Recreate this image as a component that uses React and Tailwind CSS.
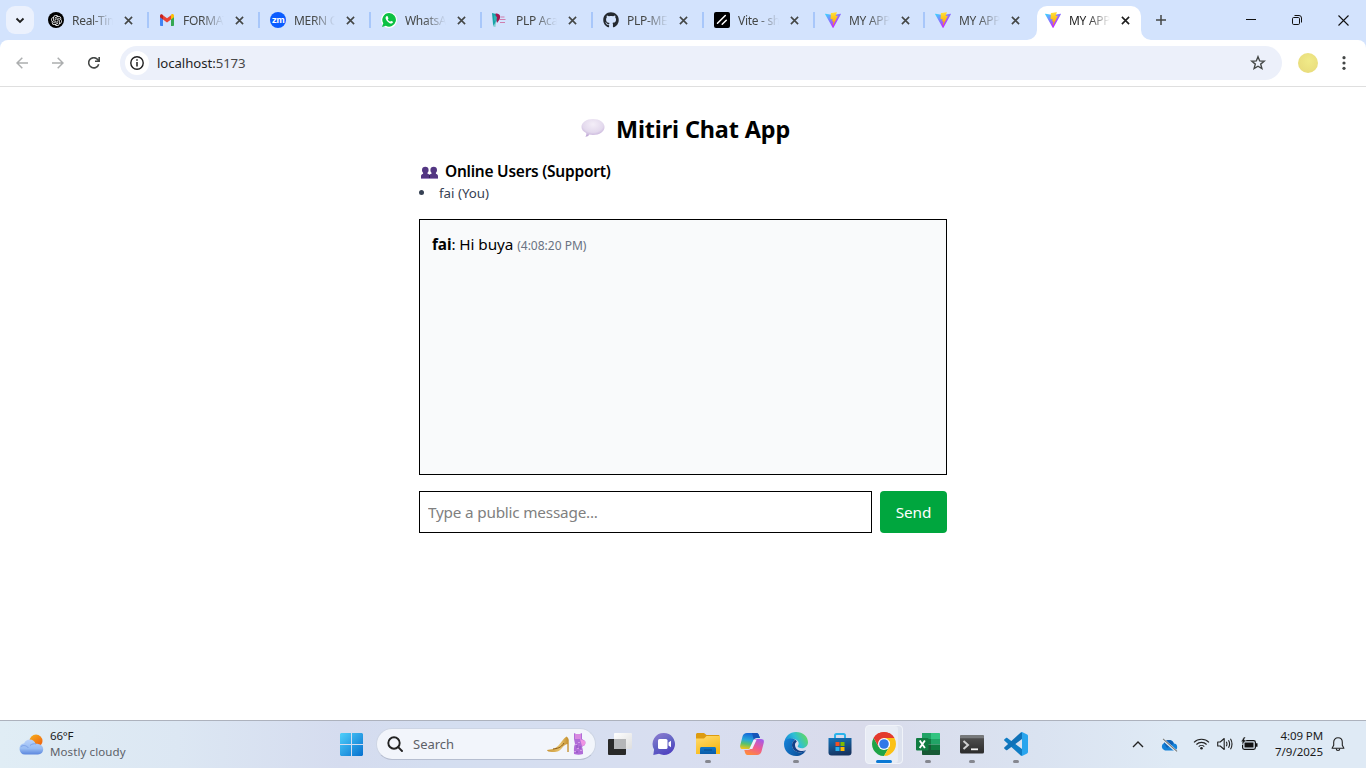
import React from "react";
import { RiOpenaiFill } from "react-icons/ri";
import { FaGithub } from "react-icons/fa";

const UI = "font-['Noto_Sans','Open_Sans',sans-serif]";

function ViteIcon({ id }) {
  return (
    <svg width="16" height="16" viewBox="0 0 256 257">
      <defs>
        <linearGradient id={id + "a"} x1="0" x2="0.58" y1="0.08" y2="0.8">
          <stop offset="0" stopColor="#41D1FF" />
          <stop offset="1" stopColor="#BD34FE" />
        </linearGradient>
        <linearGradient id={id + "b"} x1="0.43" x2="0.5" y1="0.02" y2="0.89">
          <stop offset="0" stopColor="#FFEA83" />
          <stop offset="0.08" stopColor="#FFDD35" />
          <stop offset="1" stopColor="#FFA800" />
        </linearGradient>
      </defs>
      <path fill={`url(#${id}a)`} d="M255.153 37.938L134.897 252.976c-2.483 4.44-8.862 4.466-11.382.048L.875 37.958c-2.746-4.814 1.371-10.646 6.827-9.67l120.385 21.517a6.537 6.537 0 0 0 2.322-.004l117.867-21.483c5.438-.991 9.574 4.796 6.877 9.62Z" />
      <path fill={`url(#${id}b)`} d="M185.432.063L96.44 17.501a3.268 3.268 0 0 0-2.634 3.014l-5.474 92.456a3.268 3.268 0 0 0 3.997 3.378l24.777-5.718c2.318-.535 4.413 1.507 3.936 3.838l-7.361 36.047c-.495 2.426 1.782 4.5 4.151 3.78l15.304-4.649c2.372-.72 4.652 1.36 4.15 3.788l-11.698 56.621c-.732 3.542 3.979 5.473 5.943 2.437l1.313-2.028l72.516-144.72c1.215-2.423-.88-5.186-3.54-4.672l-25.505 4.922c-2.396.462-4.435-1.77-3.759-4.114l16.646-57.705c.677-2.35-1.37-4.583-3.769-4.113Z" />
    </svg>
  );
}

const OpenAi = () => (
  <span className="flex size-4 items-center justify-center rounded-full bg-black text-white">
    <RiOpenaiFill size={13} />
  </span>
);

const Gmail = () => (
  <svg width="16" height="16" viewBox="0 0 16 16">
    <path d="M1 4v9.2c0 .5.4.8.8.8H4V6z" fill="#4285F4" />
    <path d="M12 6v8h2.200c.5 0 .8-.4.8-.8V4z" fill="#34A853" />
    <path d="M12 3.300V7.600l3-2.300V3.800c0-1.500-1.600-2.200-2.700-1.300z" fill="#FBBC04" />
    <path d="M4 7.600V3.200l4 3 4-3v4.400l-4 3z" fill="#EA4335" />
    <path d="M1 3.800v1.500l3 2.300V3.200l-.5-.5C2.400 1.800 1 2.500 1 3.800z" fill="#C5221F" />
  </svg>
);

const Zoom = () => (
  <span className="flex size-4 items-center justify-center rounded-full bg-[#0b5cff] font-['Inter',sans-serif] text-[9px] leading-none font-bold tracking-[-0.4px] text-white">
    <span className="-mt-px">zm</span>
  </span>
);

const WhatsApp = () => (
  <span className="flex size-4 items-center justify-center rounded-full bg-white">
    <svg width="16" height="16" viewBox="0 0 16 16">
      <path d="M8.200 1a6.800 6.800 0 1 1-3.300 12.800L1 15l1.300-3.700A6.800 6.800 0 0 1 8.200 1z" fill="#0cc143" />
      <path d="M5.500 4.200c-1.700 1.100-.7 3.400 1 5.200s4 3 5.200 1.400c.5-.8.3-1-.2-1.300l-1.300-.6c-.8 0-.8 1-1.400.7C7.600 9 6.900 8 6.800 7.600c0-.4.8-.8.6-1.400l-.7-1.600c-.2-.5-.7-.6-1.200-.4z" fill="#fff" />
    </svg>
  </span>
);

const Plp = () => (
  <svg width="16" height="16" viewBox="0 0 16 16">
    <path d="M0 1l4 1 1 6-3 7-1-3z" fill="#16a3a8" />
    <path d="M3.500 1.500c4.500 0 5.500 2.500 4 6L5 11z" fill="#a51850" />
    <path d="M2 3l3 2-1 5-2-2z" fill="#31b3b5" />
    <path d="M8.500 5h4M8 7.500h5.500M8 10.500h5" stroke="#cf7fae" strokeWidth="1.200" />
    <path d="M4 9l-.5 6L1.500 14z" fill="#84cfd1" />
  </svg>
);

const Shadcn = () => (
  <svg width="16" height="16" viewBox="0 0 16 16">
    <rect width="16" height="16" rx="2" fill="#000" />
    <path d="M12.300 8.200l-4.100 4.100M11.300 3.500l-7.800 7.800" stroke="#fff" strokeWidth="1.500" strokeLinecap="round" />
  </svg>
);

const Cross = ({ dark }) => (
  <svg width="9" height="9" viewBox="0 0 9 9">
    <path d="M.9.900l7.200 7.200M8.100.900L.9 8.100" stroke={dark ? "#1f1f1f" : "#444746"} strokeWidth="1.600" />
  </svg>
);

const tabs = [
  { label: "Real-Time", icon: <OpenAi />, w: "w-[111px]" },
  { label: "FORMAT", icon: <Gmail />, w: "w-[111px]" },
  { label: "MERN Cl", icon: <Zoom />, w: "w-[111px]" },
  { label: "WhatsApp", icon: <WhatsApp />, w: "w-[111px]" },
  { label: "PLP Acad", icon: <Plp />, w: "w-[111px]" },
  { label: "PLP-MER", icon: <FaGithub size={16} color="#24292f" />, w: "w-[111px]" },
  { label: "Vite - sha", icon: <Shadcn />, w: "w-[111px]" },
  { label: "MY APP", icon: <ViteIcon id="v1" />, w: "w-[110px]" },
  { label: "MY APP", icon: <ViteIcon id="v2" />, w: "w-[110px]" },
];

function TabBody({ label, icon, dark }) {
  return (
    <>
      <span className="flex size-4 shrink-0 items-center justify-center">{icon}</span>
      <span
        className={
          "mt-px ml-2 w-[41px] shrink-0 overflow-hidden text-[12px] leading-4 tracking-[-0.3px] whitespace-nowrap [mask-image:linear-gradient(to_right,#000_45%,transparent_100%)] " +
          (dark ? "text-[#1f1f1f]" : "text-[#444746]")
        }
      >
        {label}
      </span>
      <span className="ml-[11px] flex shrink-0">
        <Cross dark={dark} />
      </span>
    </>
  );
}

function TabBar() {
  return (
    <div className="flex h-10 items-stretch bg-[#d3e3fd] pl-[6px]">
      <div className="mt-[6px] flex size-7 items-center justify-center rounded-[9px] bg-[#ebf1fd]">
        <svg width="10" height="7" viewBox="0 0 10 7" fill="none">
          <path d="M1.500 1.500L5 5l3.500-3.500" stroke="#1f1f1f" strokeWidth="1.800" />
        </svg>
      </div>
      <div className="ml-1 flex">
        {tabs.map((t, i) => (
          <div key={i} className={"flex items-center pl-[10px] " + t.w}>
            <TabBody label={t.label} icon={t.icon} />
            {i < 8 && <span className="ml-auto h-4 w-[2px] bg-[#a8c7fa]" />}
          </div>
        ))}
      </div>
      <div className="ml-[-8px] flex items-end">
        <svg width="10" height="10" viewBox="0 0 10 10">
          <path d="M10 0v10H0A10 10 0 0 0 10 0z" fill="#fff" />
        </svg>
        <div className="flex h-[34px] w-[104px] items-center rounded-t-[10px] bg-white pb-[6px] pl-2">
          <TabBody label="MY APP" icon={<ViteIcon id="v3" />} dark />
        </div>
        <svg width="10" height="10" viewBox="0 0 10 10">
          <path d="M0 0v10h10A10 10 0 0 1 0 0z" fill="#fff" />
        </svg>
      </div>
      <div className="ml-[5px] flex items-center">
        <svg width="10" height="10" viewBox="0 0 10 10">
          <path d="M5 0v10M0 5h10" stroke="#444746" strokeWidth="1.500" />
        </svg>
      </div>
      <div className="ml-auto flex items-center pr-[17px]">
        <svg width="10" height="10" viewBox="0 0 10 10" shapeRendering="crispEdges">
          <path d="M0 4.500h10" stroke="#111" />
        </svg>
        <svg className="ml-9" width="10" height="10" viewBox="0 0 10 10" fill="none" stroke="#111">
          <rect x=".5" y="2.500" width="7" height="7" rx="1.200" />
          <path d="M2.500.5H7a2.500 2.500 0 0 1 2.500 2.500v4.500" />
        </svg>
        <svg className="ml-9" width="11" height="11" viewBox="0 0 11 11">
          <path d="M.5.5l10 10M10.500.5l-10 10" stroke="#111" strokeWidth="1.100" />
        </svg>
      </div>
    </div>
  );
}

function Toolbar() {
  return (
    <div className="bg-[#d3e3fd]">
      <div className="flex h-[47px] items-center rounded-t-[8px] border-b border-[#dfdfdf] bg-white pl-4">
        <svg width="12" height="12" viewBox="0 0 12 12" fill="none" stroke="#acaeaf" strokeWidth="1.500">
          <path d="M12 6H1M6.300.7L1 6l5.300 5.300" />
        </svg>
        <svg className="ml-6" width="12" height="12" viewBox="0 0 12 12" fill="none" stroke="#acaeaf" strokeWidth="1.500">
          <path d="M0 6h11M5.700.7L11 6l-5.300 5.300" />
        </svg>
        <svg className="ml-6" width="12" height="12" viewBox="0 0 12 12" fill="none" stroke="#444746" strokeWidth="1.600">
          <path d="M10.700 7.200A5.100 5.100 0 1 1 9.700 2.500L11.200 4M11.200 0v4.300H7" />
        </svg>
        <div className="ml-5 flex h-[34px] w-[1162px] items-center rounded-full bg-[#ecf0fa] pl-[5px]">
          <span className="flex size-6 items-center justify-center rounded-full bg-white">
            <svg width="14" height="14" viewBox="0 0 14 14">
              <circle cx="7" cy="7" r="6.200" fill="none" stroke="#1f1f1f" strokeWidth="1.400" />
              <path d="M7 3.200v1.500M7 6v4.500" stroke="#1f1f1f" strokeWidth="1.500" />
            </svg>
          </span>
          <span className="ml-2 text-[13.2px] leading-5 tracking-[-0.06px] text-[#1f1f1f]">
            localhost:<span className="text-[#474747]">5173</span>
          </span>
          <svg className="mr-4 ml-auto" width="16" height="16" viewBox="0 0 16 16">
            <path d="M8 1.700l1.700 4.200 4.500.3-3.500 2.900 1.200 4.500L8 11.200l-3.900 2.400 1.200-4.500L1.800 6.200l4.500-.3z" fill="none" stroke="#444746" strokeWidth="1.400" />
          </svg>
        </div>
        <span className="ml-4 size-5 rounded-full bg-[radial-gradient(circle_at_55%_40%,#f0ea88,#e6d878)]" />
        <svg className="ml-6" width="4" height="14" viewBox="0 0 4 14" fill="#444746">
          <circle cx="2" cy="1.700" r="1.600" />
          <circle cx="2" cy="7" r="1.600" />
          <circle cx="2" cy="12.300" r="1.600" />
        </svg>
      </div>
    </div>
  );
}

function Chat() {
  return (
    <main className="mx-auto w-full max-w-xl flex-1 p-6">
      <h1 className="mb-4 flex h-8 items-center pt-[3px] pl-[162px] text-[23.4px] leading-8 font-bold tracking-[-0.12px] whitespace-nowrap text-black">
        <svg className="mt-[-2px] mr-[11px] shrink-0" width="24" height="20" viewBox="0 0 24 20">
          <defs>
            <radialGradient id="bub" cx=".5" cy=".3" r=".75">
              <stop offset="0" stopColor="#f4eef8" />
              <stop offset=".6" stopColor="#e3d9ed" />
              <stop offset="1" stopColor="#b79cd0" />
            </radialGradient>
          </defs>
          <path d="M12 1c6.500 0 11.500 3.500 11.500 8s-5 8-11.500 8c-1.300 0-2.500-.1-3.600-.4C7.500 18 6 18.800 4.300 18.800c1-.9 1.200-2.300.9-3.800C2.300 13.500.5 11.500.5 9c0-4.500 5-8 11.500-8z" fill="url(#bub)" />
        </svg>
        Mitiri Chat App
      </h1>
      <section className="mb-4">
        <h2 className="flex h-6 items-center pt-px pl-[2px] text-[15.500px] font-semibold tracking-[-0.25px] text-black">
          <svg className="mt-[3px] mr-[7px]" width="17" height="14" viewBox="0 0 17 14">
            <path d="M4.300.7c2 0 3.300 1.200 3.300 3.200 0 1.300-.5 2.200-1.100 2.900v1c1.200.3 1.700.6 2 1 .3-.4.8-.7 2-1v-1c-.6-.7-1.100-1.600-1.100-2.900 0-2 1.300-3.200 3.300-3.200s3.300 1.200 3.300 3.200c0 1.300-.5 2.200-1.100 2.900v1c1.600.5 2.100 1.300 2.100 2.800V13H0v-2.400c0-1.500.5-2.300 2.100-2.800v-1C1.500 6.100 1 5.200 1 3.900 1 1.900 2.300.7 4.300.7z" fill="#533683" />
            <path d="M8.500 9v4" stroke="#34205c" />
            <path d="M0 12.500h17" stroke="#9a83bd" />
          </svg>
          Online Users (Support)
        </h2>
        <ul className="text-[13.300px] leading-5 text-[#364153]">
          <li className="flex items-center">
            <span className="mt-[-2px] mr-[15px] size-[5px] rounded-full bg-[#364153]" />
            <span>fai (You)</span>
          </li>
        </ul>
      </section>
      <div className="mb-4 h-64 border border-black bg-[#f9fafb] p-3">
        <p className="text-[15.300px] leading-6 tracking-[-0.08px] text-black">
          <strong>fai</strong>: Hi buya <span className="text-[12px] tracking-[0px] text-[#6a7282]">(4:08:20 PM)</span>
        </p>
      </div>
      <div className="flex gap-2">
        <input
          className="h-[42px] min-w-0 flex-1 border border-black px-2 text-[15.300px] tracking-[-0.2px] placeholder:text-[#808080]"
          placeholder="Type a public message..."
        />
        <button className="h-[42px] w-[67px] rounded bg-[#00a63e] pt-px text-[15.300px] tracking-[-0.1px] text-white">Send</button>
      </div>
    </main>
  );
}

const TaskView = () => (
  <svg width="24" height="24" viewBox="0 0 24 24">
    <defs><linearGradient id="tv" x2="1" y2="1"><stop stopColor="#fff" /><stop offset="1" stopColor="#dedede" /></linearGradient></defs>
    <rect x="0" y="7" width="18" height="16" rx="1" fill="#292929" />
    <rect x="6" y="1" width="18" height="16" rx="1" fill="url(#tv)" />
    <path d="M6 7h12v10H6z" fill="#b5b6b8" />
  </svg>
);

const ChatIcon = () => (
  <svg width="24" height="24" viewBox="0 0 24 24">
    <defs><linearGradient id="ct" x1=".2" y1="0" x2=".7" y2="1"><stop stopColor="#8b7bd0" /><stop offset=".5" stopColor="#6264c4" /><stop offset="1" stopColor="#4f3fc0" /></linearGradient></defs>
    <path d="M12 1a11 11 0 1 1-5 20.800L1.300 23l.8-5.500A11 11 0 0 1 12 1z" fill="url(#ct)" />
    <rect x="6" y="7" width="9.500" height="10" rx="1.500" fill="#fff" />
    <path d="M16.500 10.500L19 8.700v6.600l-2.500-1.800z" fill="#fff" />
  </svg>
);

const Explorer = () => (
  <svg width="24" height="24" viewBox="0 0 24 24">
    <defs>
      <linearGradient id="ex" y2="1" x2="0.500"><stop stopColor="#ffdc70" /><stop offset="1" stopColor="#f9b916" /></linearGradient>
      <linearGradient id="ex2" x2="0" y2="1"><stop stopColor="#1178c8" /><stop offset="1" stopColor="#0a5ba8" /></linearGradient>
    </defs>
    <path d="M0 2.500C0 1.700.7 1 1.500 1H8l2.500 2H22c1 0 2 .7 2 1.500V8H0z" fill="#dd9b10" />
    <path d="M0 6.500h8L10.500 4H24v18H0z" fill="url(#ex)" />
    <path d="M4 22v-5.500C4 15.700 4.700 15 5.500 15h13c.8 0 1.500.7 1.500 1.500V22z" fill="url(#ex2)" />
    <path d="M8 18h8" stroke="#0a4a88" strokeWidth="1" />
  </svg>
);

const Copilot = () => (
  <svg width="24" height="24" viewBox="0 0 24 24">
    <defs>
      <linearGradient id="cp1" x1=".5" y1="0" x2=".3" y2="1"><stop stopColor="#1463d8" /><stop offset=".45" stopColor="#28a9d8" /><stop offset=".7" stopColor="#5bc26a" /><stop offset="1" stopColor="#f0c419" /></linearGradient>
      <linearGradient id="cp2" x1=".8" y1="0" x2=".3" y2="1"><stop stopColor="#a45bea" /><stop offset=".5" stopColor="#ee5a92" /><stop offset="1" stopColor="#ff8a3c" /></linearGradient>
    </defs>
    <path d="M7 1h9.500c1.500 0 2 1 2.500 2.500L20 6h-3c-2 0-2.800 1-3.300 2.800L12 14.500C11.400 16.500 10.500 17 9 17H3C.5 17-.3 15.500.3 13l2.200-8.500C3.200 2.200 4.500 1 7 1z" fill="url(#cp1)" />
    <path d="M17 23H7.500C6 23 5.500 22 5 20.500L4.300 18H8c2 0 2.800-1 3.300-2.800L13 9.500c.6-2 1.500-2.500 3-2.500h5c2.500 0 3.300 1.500 2.700 4l-2.200 8.500c-.7 2.300-2 3.500-4.500 3.500z" fill="url(#cp2)" />
    <path d="M13.700 7.500h3L12.300 17h-3z" fill="#eef0fb" />
    <path d="M12 1h4.500c1.500 0 2 1 2.500 2.500L20 6h-3c-2 0-2.600.5-3.300 1.500z" fill="#1554b8" />
  </svg>
);

const Edge = () => (
  <svg width="24" height="24" viewBox="0 0 24 24">
    <defs>
      <linearGradient id="eg" x1="0" y1=".6" x2="1" y2=".2"><stop stopColor="#1480d8" /><stop offset=".5" stopColor="#2fbfd5" /><stop offset="1" stopColor="#66dc50" /></linearGradient>
      <linearGradient id="eg2" x1="0" y1="0" x2="1" y2=".5"><stop stopColor="#1683da" /><stop offset="1" stopColor="#0c4f99" /></linearGradient>
    </defs>
    <path d="M.2 11C.8 4.500 5.800 0 12 0c7 0 12 4.800 12 10.200 0 3.600-2.800 6-6 6-2.800 0-4.300-.9-4.300-1.900 0-.7 1-1.200 1-2.900C14.700 8.500 11.500 6.700 8 6.700 4 6.700 1.300 9 .2 11z" fill="url(#eg)" />
    <path d="M0 12c0-3.500 3.300-5.700 7.200-5.500 2 0 3.500.7 4.600 1.600C9.500 8.500 8 10.500 8 13c0 4 3.500 7.400 8 7.400 2.500 0 4.500-.8 6-2.200C20 21.800 16.300 24 12 24 5 24 0 18.700 0 12z" fill="url(#eg2)" />
    <path d="M11.800 8.100C9.500 8.500 8 10.500 8 13c0 4 3.500 7.400 8 7.400 2.500 0 4.500-.8 6-2.200-4 2-11 .5-11-5.500 0-1.300.7-2.500 1.800-3.300z" fill="#123f86" />
  </svg>
);

const Store = () => (
  <svg width="24" height="24" viewBox="0 0 24 24">
    <defs><linearGradient id="st" x2=".3" y2="1"><stop stopColor="#1476bd" /><stop offset="1" stopColor="#173562" /></linearGradient></defs>
    <path d="M7 6V3.500C7 2.500 7.600 2 8.500 2h7c.9 0 1.500.5 1.500 1.500V6" fill="none" stroke="#2ab3ea" strokeWidth="2" />
    <path d="M.5 6h23v14.500c0 2-1 3-3 3h-17c-2 0-3-1-3-3z" fill="url(#st)" />
    <path d="M7.500 10h4v4h-4z" fill="#f25022" />
    <path d="M12.500 10h4v4h-4z" fill="#7fba00" />
    <path d="M7.500 15h4v4h-4z" fill="#28b1ef" />
    <path d="M12.500 15h4v4h-4z" fill="#ffb900" />
  </svg>
);

const Chrome = () => (
  <svg width="24" height="24" viewBox="0 0 24 24">
    <path d="M12 12L1.610 6A12 12 0 0 1 22.390 6z" fill="#ea4335" />
    <path d="M1.610 6A12 12 0 0 0 12 24L17.200 15 12 12 6.800 15z" fill="#1ea446" />
    <path d="M22.390 6A12 12 0 0 1 12 24L17.200 15A6 6 0 0 0 17.200 9L12 6z" fill="#fbc116" />
    <path d="M1.610 6A12 12 0 0 1 22.390 6H12L6.800 15z" fill="#e33b2e" />
    <circle cx="12" cy="12" r="6" fill="#fff" />
    <circle cx="12" cy="12" r="4.800" fill="#3178e8" />
  </svg>
);

const Excel = () => (
  <svg width="24" height="24" viewBox="0 0 24 24">
    <path d="M6 1h9v6H6z" fill="#21a366" />
    <path d="M15 1h8c.6 0 1 .4 1 1v5h-9z" fill="#33c481" />
    <path d="M6 7h9v5.500H6z" fill="#107c41" />
    <path d="M15 7h9v5.500h-9z" fill="#21a366" />
    <path d="M6 12.500h9V18H6z" fill="#185c37" />
    <path d="M15 12.500h9V18h-9z" fill="#107c41" />
    <path d="M6 18h18v4c0 .6-.4 1-1 1H7c-.6 0-1-.4-1-1z" fill="#175935" />
    <rect x="0" y="6" width="12.500" height="12.500" rx="1" fill="#107c41" />
    <path d="M3.700 8.500l5.200 7.500M8.900 8.500L3.700 16" stroke="#fff" strokeWidth="1.900" />
  </svg>
);

const Terminal = () => (
  <svg width="24" height="24" viewBox="0 0 24 24">
    <defs><linearGradient id="tm" x2="0" y2="1"><stop stopColor="#555" /><stop offset="1" stopColor="#2b2b2b" /></linearGradient></defs>
    <rect y="3" width="24" height="18.500" rx="1.500" fill="url(#tm)" />
    <path d="M0 6.200V4.500C0 3.700.7 3 1.500 3h21c.8 0 1.500.7 1.500 1.500v1.700z" fill="#77797b" />
    <path d="M3.500 9l4.500 4-4.500 4" fill="none" stroke="#cfcfcf" strokeWidth="2" />
    <path d="M11 17.300h7" stroke="#f2f2f2" strokeWidth="1.800" />
  </svg>
);

const VsCode = () => (
  <svg width="24" height="24" viewBox="0 0 24 24">
    <path d="M.5 7.300L2 6c.4-.3.9-.3 1.300 0L18 17v6.900c-.6 0-1.100-.2-1.500-.6L.5 8.800c-.5-.4-.5-1.100 0-1.500z" fill="#0f7cc4" />
    <path d="M.5 16.700L2 18c.4.300.9.300 1.300 0L18 7V.1c-.6 0-1.100.2-1.500.6L.5 15.200c-.5.4-.5 1.100 0 1.500z" fill="#1072b8" />
    <path d="M16.500.7c.5-.6 1.300-.8 2-.4l4.600 2.200c.6.3.9.800.9 1.400v16.200c0 .6-.3 1.100-.9 1.400l-4.600 2.200c-.7.4-1.500.2-2-.4.600.4 1.500 0 1.500-.8v-21c0-.8-.9-1.200-1.500-.8z" fill="#29a5ee" />
  </svg>
);

function Slot({ children, mark, active }) {
  return (
    <div className="flex h-[47px] w-11 shrink-0 flex-col items-center">
      <div
        className={
          active
            ? "mt-1 flex h-[39px] w-[38px] flex-col items-center rounded-[4px] border border-[#f0f3f9] bg-[#e8ecf5] pt-[6px] shadow-[inset_-4px_0_0_#dde2ee]"
            : "mt-[11px] flex h-8 flex-col items-center"
        }
      >
        {children}
        {mark && (
          <span className={active ? "mt-[4px] h-[3px] w-4 shrink-0 rounded-full bg-[#0a78d4]" : "mt-[4px] h-[3px] w-[6px] shrink-0 rounded-full bg-[#85878f]"} />
        )}
      </div>
    </div>
  );
}

function Taskbar() {
  return (
    <footer className="flex h-12 items-start border-t border-[#adb2bd] bg-[linear-gradient(90deg,#e0edf5_0%,#dce7f3_13%,#d5dcef_25%,#d4def0_32%,#d8def0_50%,#d9dbeb_63%,#dae3f1_76%,#dfeaf5_86%,#dfeaf5_100%)]">
      <div className="flex h-[47px] w-[340px] items-center pl-[18px]">
        <svg width="26" height="24" viewBox="0 0 26 24">
          <defs>
            <linearGradient id="sun" x2=".7" y2="1"><stop stopColor="#f6b21c" /><stop offset="1" stopColor="#f0600f" /></linearGradient>
            <linearGradient id="cl" x2="0" y2="1"><stop stopColor="#b9d2fa" /><stop offset=".6" stopColor="#97bcf3" /><stop offset="1" stopColor="#5b86dd" /></linearGradient>
          </defs>
          <circle cx="18" cy="8" r="6.500" fill="url(#sun)" />
          <path d="M7 21.500a5.700 5.700 0 0 1-.8-11.300C7.300 7.800 9.300 6.500 11.800 6.500c2.900 0 5 1.800 5.700 4.200 4.500-.2 7.700 2 7.700 5.400S23 21.500 20 21.500z" fill="url(#cl)" />
          <path d="M3 13.500c3-2 6-.5 7.500 1.500M12 12.500c2-1.700 4-2 6-1.500" stroke="#7299e3" strokeWidth=".8" fill="none" />
        </svg>
        <div className="mt-[-2px] ml-[6px] text-[11.5px] leading-4 text-[#1b1b1b]">
          <div className="tracking-[-0.2px]">66°F</div>
          <div className="tracking-[0.1px] text-[#5c6068]">Mostly cloudy</div>
        </div>
      </div>
      <svg className="mt-3" width="23" height="23" viewBox="0 0 23 23">
        <defs><linearGradient id="win" x2="1" y2="1"><stop stopColor="#4fd0fb" /><stop offset="1" stopColor="#0670cf" /></linearGradient></defs>
        <path d="M1 0h10v11H0V1zM12 0h10l1 1v10H12zM0 12h11v11H1l-1-1zM12 12h11v10l-1 1H12z" fill="url(#win)" />
      </svg>
      <div className="mt-[7px] ml-[13px] flex h-[32px] w-[220px] items-center rounded-full border border-[#cdd5e4] border-b-[#b6bed0] bg-[#f2f5fb] pl-[10px]">
        <svg width="16" height="16" viewBox="0 0 16 16" fill="none" stroke="#222" strokeWidth="1.900">
          <circle cx="7" cy="7" r="5.700" />
          <path d="M11.200 11.200L15 15" strokeLinecap="round" />
        </svg>
        <span className="mt-px ml-[10px] text-[13px] text-[#5d6067]">Search</span>
        <svg className="mr-[9px] ml-auto" width="40" height="26" viewBox="0 0 40 26">
          <defs><linearGradient id="shoe" x2="1"><stop stopColor="#c99536" /><stop offset=".6" stopColor="#e8c36c" /><stop offset="1" stopColor="#c28d2c" /></linearGradient></defs>
          <path d="M1 19c4-.5 8-1 11-4 3-3 5-7 8.500-9.500 1.800 1.200 2.500 3 2.200 5V21h-1.400v-8c-2 .3-4 2-5.500 4.200C13.500 20.500 10 21 6 21c-3 0-5-.8-5-2z" fill="url(#shoe)" />
          <path d="M7 18c4-.5 8-1 11-6" stroke="#8d5d1a" fill="none" />
          <path d="M28 2l2 1h4l2-1v6l3 2c1 2 0 5-2 5l-1 1c1 2 1 5 1 7-3 1-6 1-9 0 0-4-.5-7 1-10l-1-5z" fill="#b06cd8" />
          <path d="M34 8l5 2c1 2 0 5-3 5z" fill="#ef95e3" />
          <path d="M29 3h6v5h-6z" fill="#d889e0" />
          <path d="M30 13v1M33 11v1M32 17v1M35 19v1M29 20v1" stroke="#f4cff5" />
          <path d="M31 14v3M34 15v3M31 20v2" stroke="#8a55bd" />
        </svg>
      </div>
      <div className="ml-[2px] flex">
        <Slot><TaskView /></Slot>
        <Slot><ChatIcon /></Slot>
        <Slot mark><Explorer /></Slot>
        <Slot><Copilot /></Slot>
        <Slot mark><Edge /></Slot>
        <Slot><Store /></Slot>
        <Slot mark active><Chrome /></Slot>
        <Slot mark><Excel /></Slot>
        <Slot mark><Terminal /></Slot>
        <Slot mark><VsCode /></Slot>
      </div>
      <div className="ml-auto flex h-[47px] items-center pr-[21px]">
        <svg width="12" height="7" viewBox="0 0 12 7" fill="none" stroke="#222" strokeWidth="1.400">
          <path d="M1 6l5-5 5 5" />
        </svg>
        <svg className="ml-[17px]" width="17" height="14" viewBox="0 0 17 14">
          <path d="M4 12.500A4 4 0 0 1 3 5a5.300 5.300 0 0 1 9.800.6 3.500 3.500 0 0 1 .700 6.900z" fill="#1482d8" />
          <path d="M3 5a5.300 5.300 0 0 1 9.800.6L6 10z" fill="#0d62b8" />
          <path d="M1.500 1l14 12.500" stroke="#e8f0f6" strokeWidth="2.400" />
          <path d="M2 .8l14 12.500" stroke="#777" strokeWidth="1.100" />
        </svg>
        <svg className="mt-[-2px] ml-[15px]" width="17" height="13" viewBox="0 0 17 13" fill="none" stroke="#222" strokeWidth="1.100">
          <path d="M1 5.300a10.600 10.600 0 0 1 15 0M3.400 7.500a7.200 7.200 0 0 1 10.200 0M5.700 9.600a4 4 0 0 1 5.600 0" />
          <circle cx="8.500" cy="11.300" r="1.300" fill="#222" stroke="none" />
        </svg>
        <svg className="mt-[-1px] ml-[7px]" width="16" height="14" viewBox="0 0 16 14" fill="none" stroke="#222" strokeWidth="1.100">
          <path d="M.7 5v4h2.500l4 3.500v-11L3.200 5z" strokeLinejoin="round" />
          <path d="M9.300 4.800q1.300 2.200 0 4.400M11.500 3.300q2.200 3.700 0 7.400M13.500 1.700q3 5.300 0 10.600" />
        </svg>
        <svg className="mt-[-2px] ml-[8px]" width="17" height="14" viewBox="0 0 17 14">
          <rect x="1.600" y="3.600" width="12.800" height="8.800" rx="1.800" fill="none" stroke="#111" strokeWidth="1.200" />
          <rect x="3.500" y="5.500" width="9" height="5" fill="#111" />
          <path d="M15 6.200h1.500v3.600H15z" fill="#111" />
          <path d="M2.800 0L0 4.800h2L1.200 8l4-5H3.200L4.500 0z" fill="#111" stroke="#dfeaf5" strokeWidth=".5" />
        </svg>
        <div className="mt-[-2px] ml-[16px] w-[49px] text-right text-[11.5px] leading-4 whitespace-nowrap text-[#1b1b1b]">
          <div className="tracking-[-0.1px]">4:09 PM</div>
          <div className="flex justify-end">7/9/2025</div>
        </div>
        <svg className="mt-[-1px] ml-[8px]" width="14" height="15" viewBox="0 0 14 15" fill="none" stroke="#222" strokeWidth="1.100">
          <path d="M7 .8c2.600 0 4.300 1.900 4.300 4.500v3l1.600 3H1.100l1.600-3v-3C2.700 2.700 4.400.8 7 .8z" strokeLinejoin="round" />
          <path d="M5.200 11.500c0 2.600 3.600 2.600 3.600 0" />
        </svg>
      </div>
    </footer>
  );
}

export default function App() {
  return (
    <div className={"flex h-screen w-full flex-col overflow-hidden bg-white " + UI}>
      <TabBar />
      <Toolbar />
      <Chat />
      <Taskbar />
    </div>
  );
}
